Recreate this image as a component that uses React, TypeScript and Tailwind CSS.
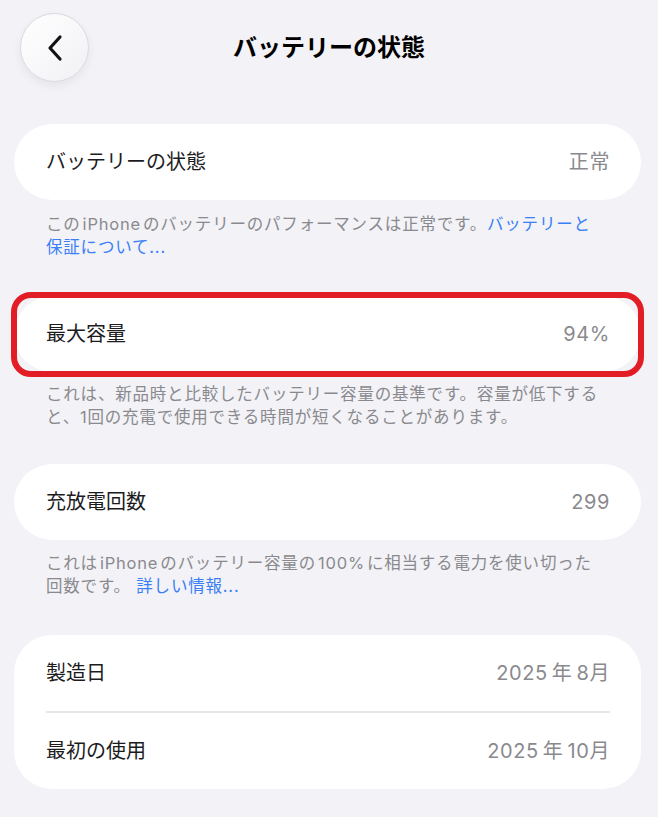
const font = { fontFamily: 'Inter, "Noto Sans CJK JP", sans-serif' };

function Row({ label, value }: { label: string; value: React.ReactNode }) {
  return (
    <div className="flex items-center justify-between h-[76px] pl-[32px] pr-[31px]">
      <span className="text-[20px] text-[#1c1c1e]">{label}</span>
      <span className="text-[20px] tracking-[0.6px] text-[#8a8a8e]">{value}</span>
    </div>
  );
}

function Footer({ children }: { children: React.ReactNode }) {
  return (
    <p className="px-[32px] text-[16.5px] leading-[23px] tracking-[0.8px] text-[#8a8a8e] whitespace-nowrap">
      {children}
    </p>
  );
}

// latin words inside japanese text get a small gap on both sides
function Latin({ children }: { children: React.ReactNode }) {
  return <span className="mx-[2px]">{children}</span>;
}

export default function App() {
  return (
    <div className="w-[658px] h-[817px] bg-[#f2f2f7] overflow-hidden" style={font}>
      <div className="grid grid-cols-[1fr_auto_1fr] items-center pt-[13px]">
        <button className="ml-[20px] w-[69px] h-[69px] rounded-full bg-gradient-to-br from-white to-[#f1f1f5] border border-[#d9d9de] shadow-[0_4px_10px_rgba(0,0,0,0.06)] flex items-center justify-center">
          <svg width="18" height="28" viewBox="0 0 18 28" fill="none">
            <path d="M14 3 L4 14 L14 25" stroke="#111" strokeWidth="3.2" strokeLinecap="round" strokeLinejoin="round" />
          </svg>
        </button>
        <h1 className="text-[24px] font-bold text-black">バッテリーの状態</h1>
        <div />
      </div>

      <div className="pl-[14px] pr-[17px]">
        <div className="mt-[42px] bg-white rounded-[38px]">
          <Row label="バッテリーの状態" value="正常" />
        </div>
        <div className="mt-[13px]">
          <Footer>
            この<Latin>iPhone</Latin>のバッテリーのパフォーマンスは正常です。<span className="text-[#3a7ff6]">バッテリーと</span>
            <br />
            <span className="text-[#3a7ff6]">保証について...</span>
          </Footer>
        </div>

        <div className="relative mt-[37px] bg-white rounded-[38px]">
          <Row label="最大容量" value="94%" />
          <div className="absolute -left-[3px] -right-[3px] -top-[4px] -bottom-[5px] border-[6px] border-[#e31d25] rounded-[20px] pointer-events-none" />
        </div>
        <div className="mt-[11px]">
          <Footer>
            これは、新品時と比較したバッテリー容量の基準です。容量が低下する
            <br />
            と、1回の充電で使用できる時間が短くなることがあります。
          </Footer>
        </div>

        <div className="mt-[35px] bg-white rounded-[38px]">
          <Row label="充放電回数" value="299" />
        </div>
        <div className="mt-[12px]">
          <Footer>
            これは<Latin>iPhone</Latin>のバッテリー容量の<Latin>100%</Latin>に相当する電力を使い切った
            <br />
            回数です。 <span className="text-[#3a7ff6]">詳しい情報...</span>
          </Footer>
        </div>

        <div className="mt-[37px] bg-white rounded-[38px]">
          <Row
            label="製造日"
            value={
              <>
                2025<span className="mx-[4px]">年</span>8月
              </>
            }
          />
          <div className="ml-[32px] mr-[31px] h-[1.5px] bg-[#e6e6ea]" />
          <Row
            label="最初の使用"
            value={
              <>
                2025<span className="mx-[4px]">年</span>10月
              </>
            }
          />
        </div>
      </div>
    </div>
  );
}
